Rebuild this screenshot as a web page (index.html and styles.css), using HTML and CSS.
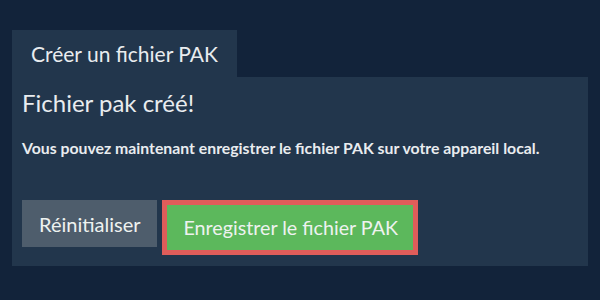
FILE: index.html
```html
<!DOCTYPE html>
<html lang="fr">
<head>
    <meta charset="UTF-8">
    <title>Créer un fichier PAK</title>
    <link rel="stylesheet" href="styles.css">
</head>
<body>
    <div class="page">
        <div class="tab">Créer un fichier PAK</div>
        <div class="panel">
            <h2 class="title">Fichier pak créé!</h2>
            <p class="info">Vous pouvez maintenant enregistrer le fichier PAK sur votre appareil local.</p>
            <div class="actions">
                <button class="btn btn-reset">Réinitialiser</button>
                <button class="btn btn-save">Enregistrer le fichier PAK</button>
            </div>
        </div>
    </div>
</body>
</html>
```

FILE: styles.css
```css
body {
    margin: 0;
    background: #12233a;
    font-family: Lato, "Open Sans", sans-serif;
    color: #e9ecef;
}

.page {
    padding: 30px 12px 0 12px;
}

.tab {
    display: inline-block;
    height: 47px;
    line-height: 47px;
    padding: 0 19px 0 19px;
    background: #22364c;
    font-size: 21px;
}

.panel {
    background: #22364c;
    padding: 6px 10px 11px 10px;
}

.title {
    margin: 0;
    font-size: 24px;
    font-weight: normal;
    line-height: 40px;
}

.info {
    margin: 15px 0 0 0;
    font-size: 15.8px;
    font-weight: bold;
    line-height: 20px;
}

.actions {
    display: flex;
    align-items: flex-start;
    gap: 5px;
    margin-top: 42px;
}

.btn {
    font-family: Lato, "Open Sans", sans-serif;
    font-size: 20px;
    color: #eef2f0;
    border: none;
    padding: 0 17px;
    height: 47px;
}

.btn-reset {
    background: #4e5d6c;
}

.btn-save {
    background: #5cb85c;
    height: 55px;
    border: 5px solid #df5d5a;
    padding: 0 15px 0 16px;
    font-size: 19.7px;
}
```
